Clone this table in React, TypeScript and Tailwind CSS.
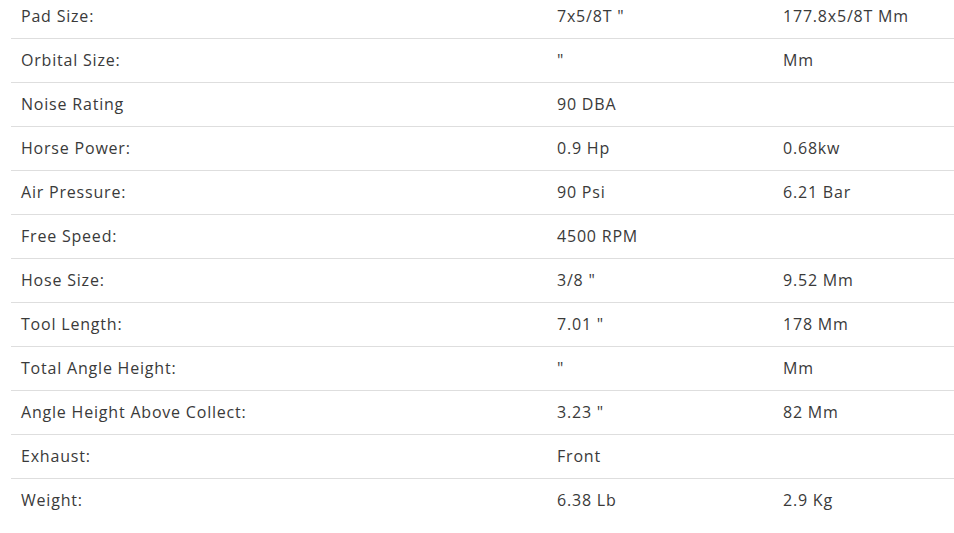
const rows: [string, string, string][] = [
  ["Pad Size:", '7x5/8T "', "177.8x5/8T Mm"],
  ["Orbital Size:", '"', "Mm"],
  ["Noise Rating", "90 DBA", ""],
  ["Horse Power:", "0.9 Hp", "0.68kw"],
  ["Air Pressure:", "90 Psi", "6.21 Bar"],
  ["Free Speed:", "4500 RPM", ""],
  ["Hose Size:", '3/8 "', "9.52 Mm"],
  ["Tool Length:", '7.01 "', "178 Mm"],
  ["Total Angle Height:", '"', "Mm"],
  ["Angle Height Above Collect:", '3.23 "', "82 Mm"],
  ["Exhaust:", "Front", ""],
  ["Weight:", "6.38 Lb", "2.9 Kg"],
];

export default function App() {
  return (
    <div className="w-[954px] h-[533px] overflow-hidden bg-white">
      <table
        className="ml-[11px] -mt-[6px] w-[943px] border-collapse text-[16px] tracking-[0.05em] text-[#3a3a3a]"
        style={{ fontFamily: '"Open Sans", "Liberation Sans", sans-serif' }}
      >
        <tbody>
          {rows.map(([label, imperial, metric], i) => (
            <tr
              key={label}
              className={i < rows.length - 1 ? "h-[44px] border-b border-[#dedede]" : "h-[44px]"}
            >
              <td className="w-[535px] pl-[10px] align-middle">{label}</td>
              <td className="w-[226px] pl-[11px] align-middle">{imperial}</td>
              <td className="pl-[11px] align-middle">{metric}</td>
            </tr>
          ))}
        </tbody>
      </table>
    </div>
  );
}
